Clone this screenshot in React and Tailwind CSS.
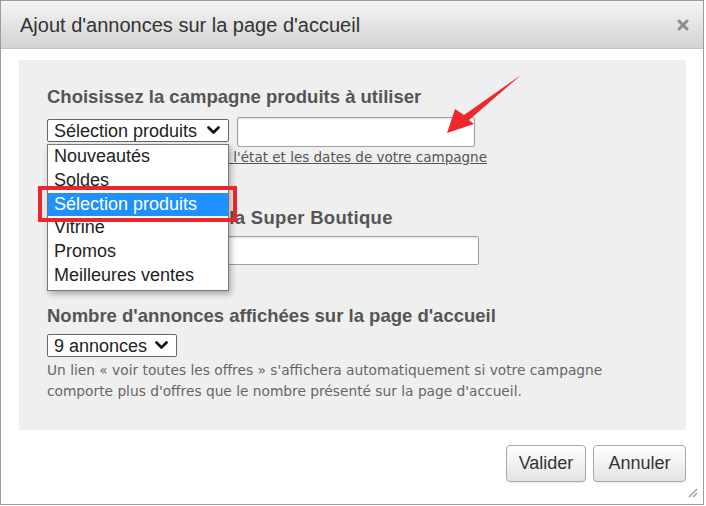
import React from "react";

function Chevron() {
  return (
    <svg width="13" height="9" viewBox="0 0 13 9" className="shrink-0">
      <path d="M1.5 1.5 L6.5 6.5 L11.5 1.5" fill="none" stroke="#111" strokeWidth="2.6" strokeLinecap="round" strokeLinejoin="round" />
    </svg>
  );
}

export default function App() {
  const items = ["Nouveautés", "Soldes", "Sélection produits", "Vitrine", "Promos", "Meilleures ventes"];
  return (
    <div className="relative w-[706px] h-[506px] bg-white font-['Liberation_Sans',Arial,sans-serif]">
      <div className="w-[704px] h-[505px] border border-[#9c9c9c] flex flex-col">
        {/* header */}
        <div className="h-[48px] shrink-0 border-b border-[#c2c2c2] bg-gradient-to-b from-[#f6f6f6] to-[#d2d2d2] flex items-center justify-between pl-[19px] pr-[14px]">
          <span className="text-[20px] text-[#333]">Ajout d'annonces sur la page d'accueil</span>
          <svg width="12" height="12" viewBox="0 0 12 12">
            <path d="M2 2 L10 10 M10 2 L2 10" stroke="#8e8e8e" strokeWidth="3" strokeLinecap="round" />
          </svg>
        </div>
        {/* body */}
        <div className="flex-1 pl-[18px] pr-[17px] pt-[11px] flex flex-col">
          <div className="h-[370px] bg-[#efefef] pl-[28px] pt-[26px] flex flex-col items-start">
            <div className="text-[18.5px] leading-[22px] font-bold text-[#555]">Choisissez la campagne produits à utiliser</div>
            <div className="mt-[9px] flex items-start gap-[8px]">
              <div className="mt-[2px] w-[182px] h-[23px] bg-white border border-[#666] rounded-[2px] flex items-center justify-between pl-[6px] pr-[8px]">
                <span className="text-[18px] leading-[22px] text-[#222]">Sélection produits</span>
                <Chevron />
              </div>
              <div className="w-[238px] h-[30px] bg-white border border-[#a0a0a0] rounded-[2px] shadow-[inset_0_1px_2px_rgba(0,0,0,0.12)]"></div>
            </div>
            <div className="mt-[1px] w-[440px] flex justify-end">
              <span className="whitespace-nowrap text-[13.5px] leading-[18px] text-[#555] underline font-['DejaVu_Sans',Verdana,sans-serif]">Cliquez ici pour consulter l'état et les dates de votre campagne</span>
            </div>
            <div className="mt-[41px] text-[18.5px] leading-[22px] font-bold text-[#555] tracking-[0.3px]">Titre de l'encart sur la Super Boutique</div>
            <div className="mt-[7px] w-[432px] h-[29px] bg-white border border-[#a0a0a0] rounded-[2px] shadow-[inset_0_1px_2px_rgba(0,0,0,0.12)]"></div>
            <div className="mt-[40px] text-[18.5px] leading-[22px] font-bold text-[#555]">Nombre d'annonces affichées sur la page d'accueil</div>
            <div className="mt-[7px] w-[130px] h-[23px] bg-white border border-[#666] rounded-[2px] flex items-center justify-between pl-[6px] pr-[8px]">
              <span className="text-[18px] leading-[22px] text-[#222]">9 annonces</span>
              <Chevron />
            </div>
            <div className="mt-[3px] text-[13.75px] leading-[21px] text-[#666] font-['DejaVu_Sans',Verdana,sans-serif]">
              Un lien « voir toutes les offres » s'affichera automatiquement si votre campagne
              <br />
              comporte plus d'offres que le nombre présenté sur la page d'accueil.
            </div>
          </div>
          <div className="mt-[15px] flex justify-end gap-[7px]">
            <button className="w-[80px] h-[37px] rounded-[4px] border border-[#a8a8a8] bg-gradient-to-b from-[#ffffff] to-[#e4e4e4] text-[18px] text-[#333] shadow-[0_1px_1px_rgba(0,0,0,0.08)]">Valider</button>
            <button className="w-[93px] h-[37px] rounded-[4px] border border-[#a8a8a8] bg-gradient-to-b from-[#ffffff] to-[#e4e4e4] text-[18px] text-[#333] shadow-[0_1px_1px_rgba(0,0,0,0.08)]">Annuler</button>
          </div>
        </div>
      </div>

      {/* resize grip */}
      <svg className="absolute left-[686px] top-[486px]" width="12" height="12" viewBox="0 0 12 12">
        <path d="M11 3 L3 11 M11 7 L7 11" stroke="#a0a0a0" strokeWidth="1.5" />
      </svg>

      {/* open dropdown list */}
      <div className="absolute left-[47px] top-[144px] w-[182px] h-[147px] bg-white border border-[#777] shadow-[2px_3px_6px_rgba(0,0,0,0.3)]">
        {items.map((it, i) => (
          <div
            key={it}
            className={
              i === 2
                ? "h-[23.8px] leading-[23.8px] pl-[6px] text-[18px] bg-[#1e90ff] text-white"
                : "h-[23.8px] leading-[23.8px] pl-[6px] text-[18px] text-[#222]"
            }
          >
            {it}
          </div>
        ))}
      </div>

      {/* red highlight box */}
      <div className="absolute left-[38px] top-[186px] w-[199px] h-[36px] border-[4px] border-[#e8262c]"></div>

      {/* red arrow */}
      <svg className="absolute left-0 top-0 pointer-events-none" width="706" height="506" viewBox="0 0 706 506">
        <polygon points="447,133 455,109 464,115 521,75 469,120 474,124" fill="#f0282c" />
      </svg>
    </div>
  );
}
